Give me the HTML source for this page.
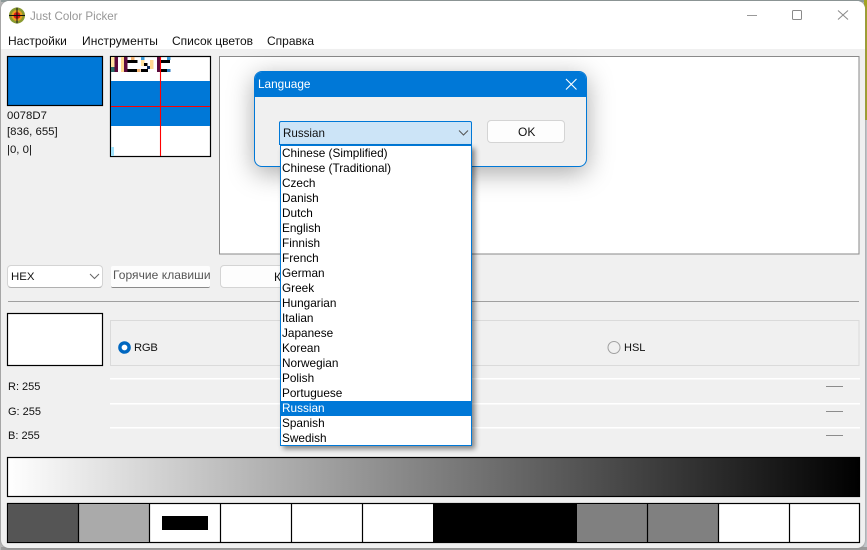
<!DOCTYPE html>
<html><head><meta charset="utf-8"><style>
html,body{margin:0;padding:0}
body{width:867px;height:550px;position:relative;overflow:hidden;background:#b9b9b9;font-family:"Liberation Sans",sans-serif;font-size:12px;color:#111}
div{position:absolute;box-sizing:border-box}
.t{white-space:nowrap;line-height:15px}
.li{left:0;width:190px;height:15px;line-height:15px;padding-left:1px;white-space:nowrap;font-size:11.8px;color:#000}
svg{position:absolute;left:0;top:0}
</style></head><body>
<div style="left:864px;top:0;width:3px;height:120px;background:#a3a421"></div>
<div style="left:864px;top:120px;width:3px;height:430px;background:#c4c8cc"></div>
<div style="left:0;top:0;width:864px;height:2px;background:#8d9a9a"></div>
<div style="left:0;top:547px;width:867px;height:3px;background:#9b9b9b"></div>
<div style="left:0;top:0;width:1px;height:550px;background:#b5b5b5"></div>
<div style="left:1px;top:1px;width:863.5px;height:547px;background:#f0f0f0;border-radius:8px;box-shadow:0 0 2px #888;overflow:hidden">
<div style="left:0;top:0;width:864px;height:48px;background:#fff"></div>
</div>
<div class="t" style="left:30px;top:9px;color:#979797;font-size:11.6px">Just Color Picker</div>
<div class="t" style="left:8px;top:34px">Настройки</div>
<div class="t" style="left:82px;top:34px;letter-spacing:.1px">Инструменты</div>
<div class="t" style="left:172px;top:34px">Список цветов</div>
<div class="t" style="left:267px;top:34px">Справка</div>

<svg width="867" height="550" viewBox="0 0 867 550">
<!-- app icon -->
<circle cx="17" cy="15.5" r="8" fill="#8a9a30"/><circle cx="17" cy="15.5" r="5.5" fill="#e8a020"/><circle cx="17" cy="15.5" r="3.4" fill="#d81818"/>
<path d="M17 7.5V23.5M9 15.5H25" stroke="#111" stroke-width="1"/>
<!-- window controls -->
<path d="M747 15.5H757" stroke="#999" stroke-width="1"/>
<rect x="792.5" y="10.5" width="9" height="9" rx="1" fill="none" stroke="#8a8a8a"/>
<path d="M838 10.5L848 19.5M848 10.5L838 19.5" stroke="#8a8a8a" stroke-width="1"/>
<!-- swatch -->
<rect x="7.5" y="56.5" width="95" height="49" fill="#0078d7" stroke="#000" stroke-width="1.2"/>
<!-- magnifier -->
<rect x="110.5" y="56.5" width="100" height="100" fill="#fff" stroke="#000" stroke-width="1.2"/>
<rect x="111" y="81" width="99" height="45" fill="#0078d7"/>
<g>
<rect x="111" y="57" width="3.5" height="13" fill="#ffe2a0"/><rect x="111" y="67" width="3.5" height="5" fill="#2a6a68"/>
<rect x="114.5" y="57" width="3.5" height="15" fill="#5c0a3c"/>
<rect x="121" y="57" width="3.5" height="15" fill="#ffd890"/><rect x="124" y="57" width="3.5" height="15" fill="#5c0a3c"/>
<rect x="127.5" y="60" width="10" height="3" fill="#000"/><rect x="127.5" y="69" width="10" height="3" fill="#000"/>
<rect x="131" y="57" width="3.5" height="3" fill="#f0b070"/><rect x="137" y="69" width="3.5" height="3" fill="#f0b070"/>
<rect x="141" y="57" width="3.5" height="3" fill="#3a9ad8"/><rect x="141" y="60" width="3.5" height="6" fill="#ffe2a0"/>
<rect x="144" y="63" width="3.5" height="3" fill="#000"/><rect x="147" y="66" width="3.5" height="3" fill="#0a2a60"/>
<rect x="141" y="69" width="7" height="3" fill="#000"/><rect x="150" y="60" width="3.5" height="9" fill="#ffd890"/>
<rect x="157" y="57" width="3.5" height="15" fill="#5c0a3c"/><rect x="160" y="60" width="10" height="3" fill="#000"/>
<rect x="160" y="69" width="10" height="3" fill="#000"/><rect x="167" y="57" width="3.5" height="3" fill="#3a9ad8"/><rect x="167" y="69" width="3.5" height="3" fill="#2a7ac0"/>
<rect x="111" y="147" width="3" height="9" fill="#9fe2fb"/>
</g>
<path d="M111 106.5H210M160.5 57V156" stroke="#f00" stroke-width="1.1"/>
<!-- output box -->
<rect x="219.5" y="56.5" width="639.5" height="197.5" fill="#fff" stroke="#8a8a8a" stroke-width="1"/>
<!-- separator -->
<rect x="8" y="301" width="851" height="1" fill="#a0a0a0"/>
<!-- preview -->
<rect x="7.5" y="313.5" width="95" height="52" fill="#fff" stroke="#000" stroke-width="1.2"/>
<!-- group box -->
<rect x="110.5" y="320.5" width="748.5" height="45" fill="none" stroke="#dadada"/>
<circle cx="124.5" cy="347.5" r="4.6" fill="#fff" stroke="#0067c0" stroke-width="3.4"/>
<circle cx="614" cy="347.5" r="6" fill="#f0f0f0" stroke="#a0a0a0" stroke-width="1"/>
<rect x="110" y="378" width="750" height="1.5" fill="#fff"/>
<rect x="110" y="403" width="750" height="1.5" fill="#fff"/>
<rect x="110" y="427" width="750" height="1.5" fill="#fff"/>
<rect x="826" y="386" width="17" height="1" fill="#8c8c8c"/>
<rect x="826" y="411" width="17" height="1" fill="#8c8c8c"/>
<rect x="826" y="435" width="17" height="1" fill="#8c8c8c"/>
<!-- gradient -->
<defs><linearGradient id="g"><stop offset="0" stop-color="#fff"/><stop offset="1" stop-color="#000"/></linearGradient></defs>
<rect x="7.5" y="457.5" width="852" height="39" fill="url(#g)" stroke="#000" stroke-width="1.2"/>
<!-- palette -->
<rect x="7.5" y="503.5" width="852" height="39" fill="#fff" stroke="#000" stroke-width="1.2"/>
<rect x="8" y="504" width="70.5" height="38" fill="#555"/>
<rect x="79" y="504" width="70" height="38" fill="#aaa"/>
<rect x="162" y="516" width="46" height="14" fill="#000"/>
<rect x="433" y="503" width="144" height="40" fill="#000"/>
<rect x="577" y="504" width="70" height="38" fill="#808080"/>
<rect x="648" y="504" width="70" height="38" fill="#808080"/>
<path d="M78.5 504V542M149.5 504V542M220.5 504V542M291.500 504V542M362.500 504V542M647.500 504V542M718.500 504V542M789.500 504V542" stroke="#000" stroke-width="1.2"/>
</svg>

<div class="t" style="left:7px;top:109px;font-size:11.4px">0078D7</div>
<div class="t" style="left:7px;top:125px;font-size:11.4px">[836, 655]</div>
<div class="t" style="left:7px;top:143px;font-size:11.4px">|0, 0|</div>

<!-- controls -->
<div style="left:7px;top:265px;width:96px;height:23px;background:#fff;border:1px solid #d4d4d4;border-bottom-color:#b0b0b0;border-radius:4px"></div>
<div class="t" style="left:11px;top:270px;font-size:11.4px">HEX</div>
<svg width="867" height="550" viewBox="0 0 867 550"><path d="M90 274L94.5 278.5L99 274" fill="none" stroke="#666" stroke-width="1"/></svg>
<div style="left:111px;top:266px;width:99px;height:22px;background:#fdfdfd;border-bottom:1px solid #8a8a8a;border-radius:2px;overflow:hidden">
<div class="t" style="left:2px;top:2px;color:#555;font-size:12px;letter-spacing:.05px">Горячие клавиши</div></div>
<div style="left:220px;top:265px;width:120px;height:23px;background:#fdfdfd;border:1px solid #d4d4d4;border-radius:4px"></div>
<div class="t" style="left:274px;top:270px">К</div>

<div class="t" style="left:134px;top:341px;font-size:11.2px;letter-spacing:-.2px">RGB</div>
<div class="t" style="left:624px;top:341px;font-size:11px">HSL</div>
<div class="t" style="left:8px;top:380px;font-size:11px">R: 255</div>
<div class="t" style="left:8px;top:405px;font-size:11px">G: 255</div>
<div class="t" style="left:8px;top:429px;font-size:11px">B: 255</div>

<!-- dialog -->
<div style="left:254px;top:71px;width:333px;height:96px;background:#f0f0f0;border:1px solid #0078d7;border-radius:8px;box-shadow:0 6px 26px rgba(0,0,0,.34);overflow:hidden">
<div style="left:-1px;top:-1px;width:333px;height:26px;background:#0078d7"></div>
</div>
<div class="t" style="left:258px;top:77px;color:#fff;font-size:11.8px">Language</div>
<svg width="867" height="550" viewBox="0 0 867 550"><path d="M566 79L576.5 89.5M576.5 79L566 89.5" stroke="#fff" stroke-width="1.1"/></svg>
<div style="left:279px;top:121px;width:193px;height:24px;background:#cce4f7;border:1px solid #0078d7;border-radius:2px 2px 0 0"></div>
<div class="t" style="left:283px;top:126px;font-size:11.6px;color:#111">Russian</div>
<svg width="867" height="550" viewBox="0 0 867 550"><path d="M459 130.5L463.5 135L468 130.5" fill="none" stroke="#555" stroke-width="1"/></svg>
<div style="left:487px;top:120px;width:78px;height:23px;background:#fdfdfd;border:1px solid #d4d4d4;border-radius:4px"></div>
<div class="t" style="left:518px;top:125px;font-size:12px;color:#111">OK</div>

<!-- list -->
<div style="left:280px;top:145px;width:192px;height:301px;background:#fff;border:1px solid #0078d7;box-shadow:3px 3px 5px rgba(0,0,0,.45)">
<div class="li" style="top:0px">Chinese (Simplified)</div>
<div class="li" style="top:15px">Chinese (Traditional)</div>
<div class="li" style="top:30px">Czech</div>
<div class="li" style="top:45px">Danish</div>
<div class="li" style="top:60px">Dutch</div>
<div class="li" style="top:75px">English</div>
<div class="li" style="top:90px">Finnish</div>
<div class="li" style="top:105px">French</div>
<div class="li" style="top:120px">German</div>
<div class="li" style="top:135px">Greek</div>
<div class="li" style="top:150px">Hungarian</div>
<div class="li" style="top:165px">Italian</div>
<div class="li" style="top:180px">Japanese</div>
<div class="li" style="top:195px">Korean</div>
<div class="li" style="top:210px">Norwegian</div>
<div class="li" style="top:225px">Polish</div>
<div class="li" style="top:240px">Portuguese</div>
<div class="li" style="top:255px;background:#0078d7;color:#fff">Russian</div>
<div class="li" style="top:270px">Spanish</div>
<div class="li" style="top:285px">Swedish</div>
</div>
</body></html>
